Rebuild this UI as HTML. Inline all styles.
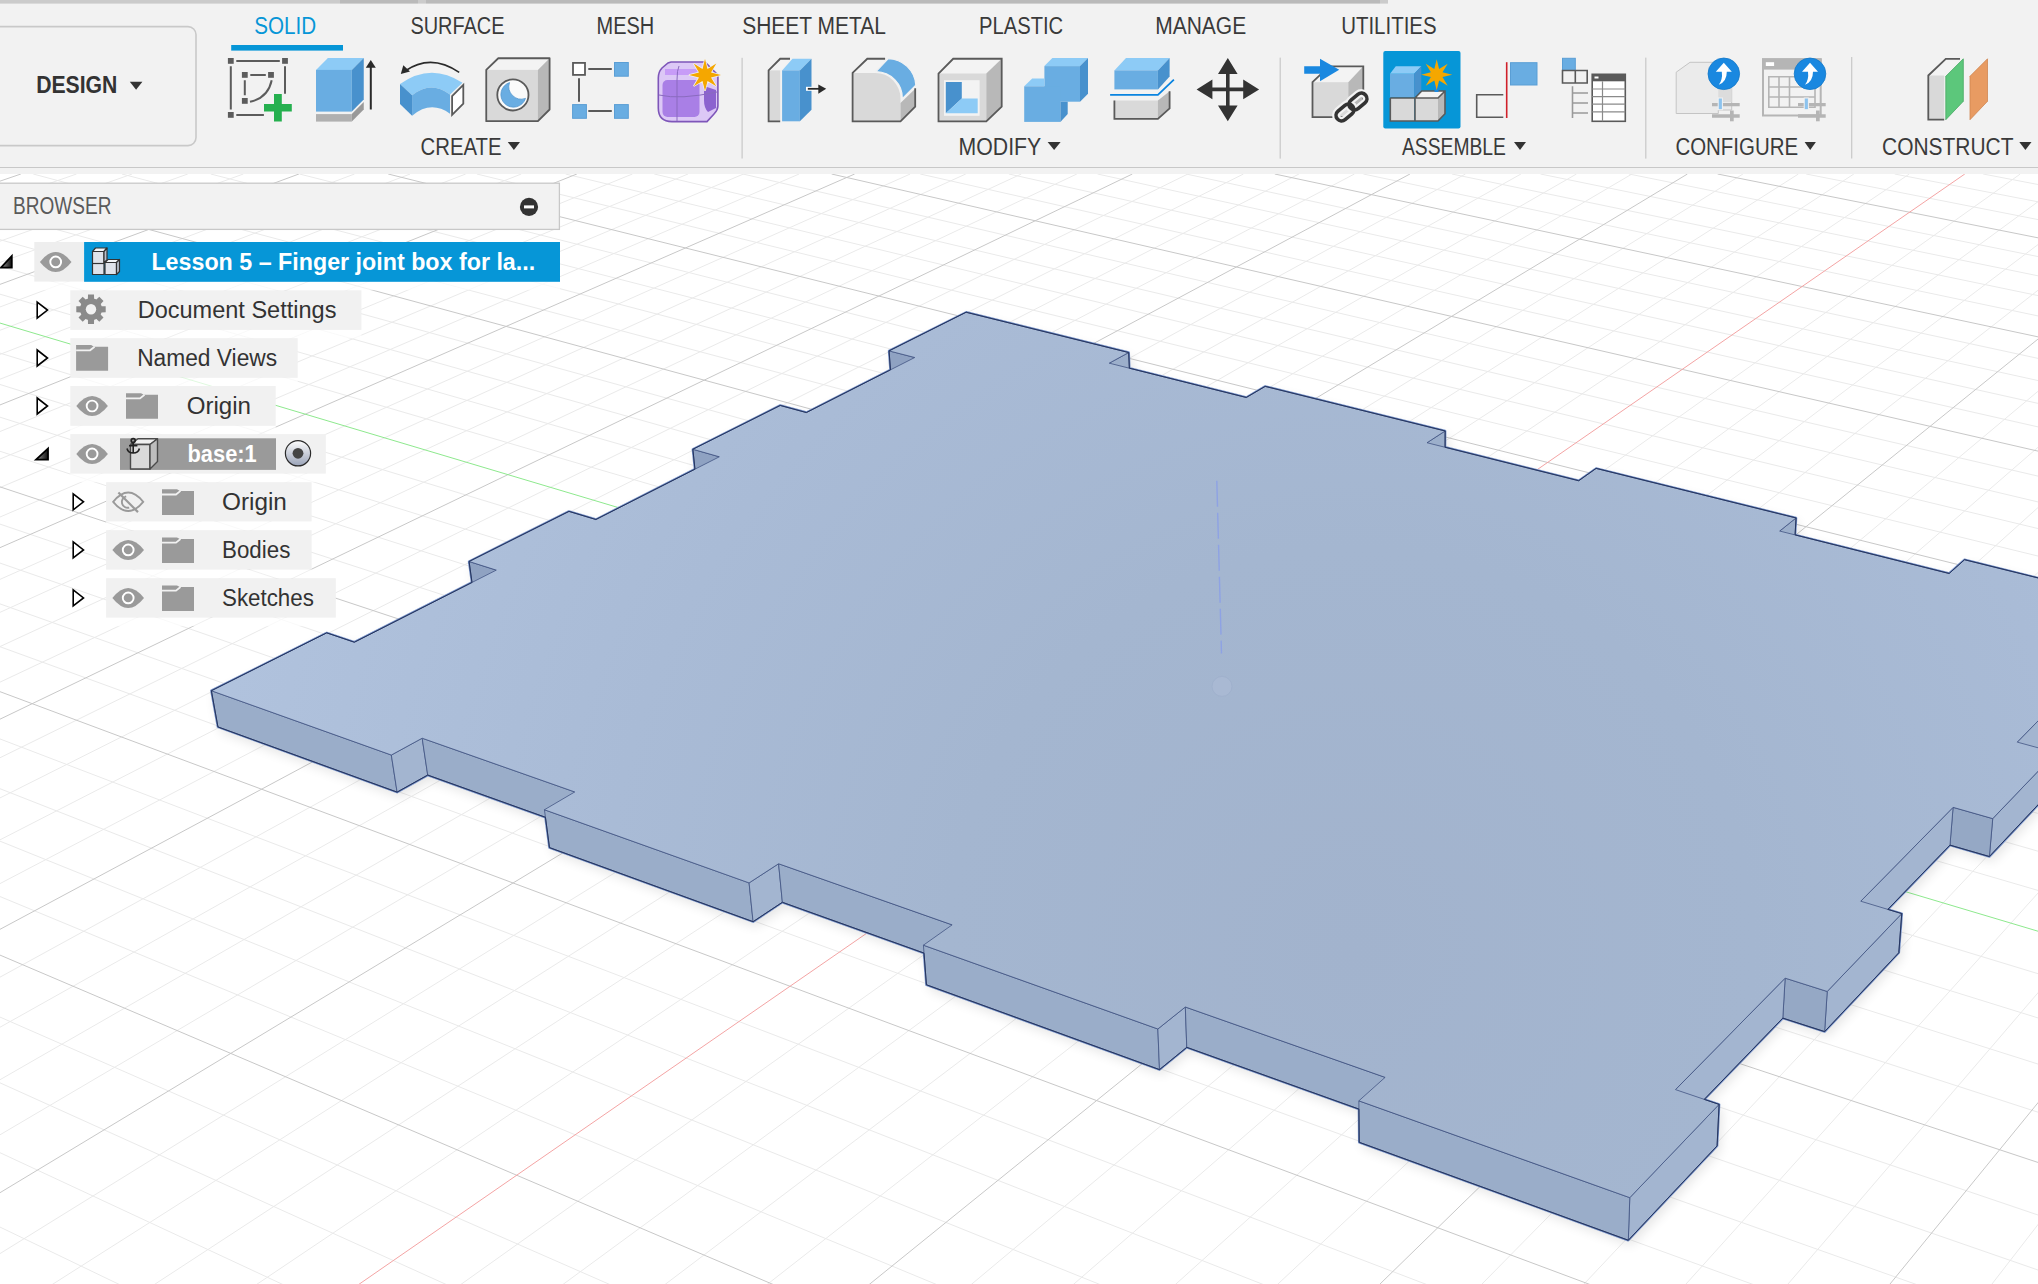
<!DOCTYPE html>
<html><head><meta charset="utf-8"><title>Fusion 360</title><style>
html,body{margin:0;padding:0;}
body{width:2038px;height:1284px;position:relative;overflow:hidden;background:#fff;font-family:"Liberation Sans",sans-serif;}
svg text{font-family:"Liberation Sans",sans-serif;}
</style></head><body>
<svg width="2038" height="1284" viewBox="0 0 2038 1284" style="position:absolute;left:0;top:0">
<defs><radialGradient id="gtop" gradientUnits="userSpaceOnUse" cx="1350" cy="950" r="1150"><stop offset="0" stop-color="#a2b3cd"/><stop offset="0.35" stop-color="#a4b6d0"/><stop offset="0.65" stop-color="#a9bbd6"/><stop offset="1" stop-color="#b0c2dd"/></radialGradient><filter id="shd" x="-10%" y="-10%" width="120%" height="120%"><feGaussianBlur stdDeviation="6"/></filter></defs>
<rect width="2038" height="1284" fill="#fff"/>
<path d="M234.76 1340L-50 1203.04M401.96 1340L-50 1129.4M569.14 1340L-50 1060.24M736.3 1340L-50 995.15M1070.55 1340L-50 875.83M1237.64 1340L-50 821.02M1404.72 1340L-50 769.09M1571.77 1340L-50 719.83M1905.8 1340L-50 628.53M2072.78 1340L-50 586.14M2100 1291.52L-50 545.73M2100 1236.03L-50 507.16M2100 1132.29L-50 435.05M2100 1083.73L-50 401.3M2100 1037.2L-50 368.95M2100 992.57L-50 337.93M2100 908.56L-50 279.54M2100 868.98L-50 252.03M2100 830.9L-50 225.56M2100 794.23L-50 200.07M2100 724.82L33.23 174M2100 691.94L121.98 174M2100 660.2L210.72 174M2100 629.53L299.46 174M2100 571.22L476.88 174M2100 543.48L565.58 174M2100 516.62L654.27 174M2100 490.59L742.94 174M2100 440.92L920.25 174M2100 417.19L1008.89 174M2100 394.16L1097.52 174M2100 371.8L1186.14 174M2100 328.97L1363.33 174M2100 308.45L1451.92 174M2100 288.49L1540.49 174M2100 269.08L1629.04 174M2100 231.77L1806.13 174M2100 213.85L1894.65 174M2100 196.38L1983.16 174M2100 179.36L2071.66 174M2052.94 1340L2100 1275.75M1948.62 1340L2100 1144.53M1739.96 1340L2100 920.55M1635.62 1340L2100 824.21M1531.27 1340L2100 736.45M1426.91 1340L2100 656.17M1218.16 1340L2100 514.52M1113.78 1340L2100 451.72M1009.39 1340L2100 393.49M904.98 1340L2100 339.36M696.15 1340L2100 241.75M591.73 1340L2100 197.6M487.29 1340L2075.71 174M382.85 1340L2020.25 174M173.93 1340L1909.33 174M69.46 1340L1853.86 174M-35.02 1340L1798.39 174M-50 1284.56L1742.92 174M-50 1164.25L1631.95 174M-50 1108.45L1576.46 174M-50 1055.28L1520.96 174M-50 1004.55L1465.46 174M-50 909.79L1354.45 174M-50 865.47L1298.94 174M-50 823.02L1243.42 174M-50 782.32L1187.9 174M-50 705.76L1076.84 174M-50 669.71L1021.3 174M-50 635.03L965.76 174M-50 601.65L910.22 174M-50 538.5L799.11 174M-50 508.61L743.56 174M-50 479.75L687.99 174M-50 451.88L632.42 174M-50 398.91L521.28 174M-50 373.72L465.69 174M-50 349.33L410.11 174M-50 325.71L354.52 174M-50 280.64L243.32 174M-50 259.12L187.72 174M-50 238.24L132.11 174M-50 217.97L76.5 174M-50 179.15L-34.74 174" stroke="#eaeaea" stroke-width="1" fill="none"/>
<path d="M67.53 1340L-50 1281.59M903.44 1340L-50 933.79M1738.79 1340L-50 673.04M2100 1183L-50 470.3M2100 758.89L-50 175.5M2100 599.89L388.18 174M2100 465.37L831.6 174M2100 350.08L1274.74 174M2100 250.18L1717.59 174M1844.3 1340L2100 1026.79M1322.54 1340L2100 582.45M800.57 1340L2100 288.9M-50 1222.88L1687.43 174M-50 956.11L1409.96 174M-50 743.26L1132.37 174M-50 569.5L854.67 174M-50 424.95L576.85 174M-50 302.83L298.92 174M-50 198.28L20.88 174" stroke="#c8c8c8" stroke-width="1" fill="none"/>
<path d="M278.39 1340L1964.8 174" stroke="#f4a4a4" stroke-width="1" fill="none"/>
<path d="M2100 949.72L-50 308.15" stroke="#8ee98e" stroke-width="1" fill="none"/>
<polygon points="780.24,405.46 692.87,449.27 694.95,469.18 595.88,519.52 568.97,511.4 469.07,561.5 471.99,582.47 354.35,642.23 326.73,632.88 211.39,690.72 217.94,726.92 397.1,792.12 427.71,775.06 545.44,817.29 549.47,847.58 753.08,921.68 782.37,902.28 924.01,953.08 926.44,984.78 1159.51,1069.6 1186.78,1047.34 1358.94,1109.09 1359.23,1142.29 1628.3,1240.22 1717.08,1145.88 1719.1,1104.38 1704.29,1099.37 1782.81,1018.11 1824.62,1031.6 1898.81,952.76 1901.78,913.6 1887.85,909.4 1949.97,845.11 1989.37,856.53 2052.3,789.66 2055.9,752.64 2042.77,749.07 2092.38,697.72 2129.6,707.51 2183.64,650.09 2187.67,615.02 1964.56,559.72 1949.15,573.49 1795.09,534.91 1796.04,517.95 1596.13,468.4 1578.73,480.73 1445.06,447.26 1445.13,430.97 1265.2,386.38 1246.29,397.49 1129.34,368.2 1128.7,352.54 966.12,312.25 889.06,350.89 890.49,369.84 806.38,412.57" fill="#000" opacity="0.10" filter="url(#shd)" transform="translate(3,5)"/>
<polygon points="780.24,405.46 692.87,449.27 694.95,469.18 595.88,519.52 568.97,511.4 469.07,561.5 471.99,582.47 354.35,642.23 326.73,632.88 211.39,690.72 217.94,726.92 397.1,792.12 427.71,775.06 545.44,817.29 549.47,847.58 753.08,921.68 782.37,902.28 924.01,953.08 926.44,984.78 1159.51,1069.6 1186.78,1047.34 1358.94,1109.09 1359.23,1142.29 1628.3,1240.22 1717.08,1145.88 1719.1,1104.38 1704.29,1099.37 1782.81,1018.11 1824.62,1031.6 1898.81,952.76 1901.78,913.6 1887.85,909.4 1949.97,845.11 1989.37,856.53 2052.3,789.66 2055.9,752.64 2042.77,749.07 2092.38,697.72 2129.6,707.51 2183.64,650.09 2187.67,615.02 1964.56,559.72 1949.15,573.49 1795.09,534.91 1796.04,517.95 1596.13,468.4 1578.73,480.73 1445.06,447.26 1445.13,430.97 1265.2,386.38 1246.29,397.49 1129.34,368.2 1128.7,352.54 966.12,312.25 889.06,350.89 890.49,369.84 806.38,412.57" fill="#9aadc8" stroke="#7591c8" stroke-width="2.5" stroke-linejoin="round"/>
<polygon points="891.39,381.92 916.98,388.65 914.76,357.51 889.06,350.89" fill="#8fa2c2" stroke="#3e5080" stroke-width="0.9" stroke-opacity="0.85" stroke-linejoin="round"/>
<polygon points="1110.6,394.4 1129.97,383.6 1128.7,352.54 1109.23,363.17" fill="#9cafcb" stroke="#3e5080" stroke-width="0.9" stroke-opacity="0.85" stroke-linejoin="round"/>
<polygon points="696.28,481.87 722.64,489.51 719.34,456.79 692.87,449.27" fill="#8fa2c2" stroke="#3e5080" stroke-width="0.9" stroke-opacity="0.85" stroke-linejoin="round"/>
<polygon points="1426.94,475.23 1444.99,463.27 1445.13,430.97 1427,442.74" fill="#9cafcb" stroke="#3e5080" stroke-width="0.9" stroke-opacity="0.85" stroke-linejoin="round"/>
<polygon points="473.85,595.82 500.96,604.56 496.29,570.12 469.07,561.5" fill="#8fa2c2" stroke="#3e5080" stroke-width="0.9" stroke-opacity="0.85" stroke-linejoin="round"/>
<polygon points="1777.86,564.88 1794.15,551.58 1796.04,517.95 1779.67,531.05" fill="#9cafcb" stroke="#3e5080" stroke-width="0.9" stroke-opacity="0.85" stroke-linejoin="round"/>
<polygon points="2129.6,707.51 2183.64,650.09 2187.67,615.02 2133.47,671.62" fill="#a3b5d0" stroke="#3e5080" stroke-width="0.9" stroke-opacity="0.85" stroke-linejoin="round"/>
<polygon points="2092.38,697.72 2129.6,707.51 2133.47,671.62 2096.03,661.97" fill="#95a8c5" stroke="#3e5080" stroke-width="0.9" stroke-opacity="0.85" stroke-linejoin="round"/>
<polygon points="217.94,726.92 397.1,792.12 391.34,755.04 211.39,690.72" fill="#9aadc9" stroke="#3e5080" stroke-width="0.9" stroke-opacity="0.85" stroke-linejoin="round"/>
<polygon points="2013.85,778.99 2092.38,697.72 2096.03,661.97 2017.22,742.11" fill="#a3b5d0" stroke="#3e5080" stroke-width="0.9" stroke-opacity="0.85" stroke-linejoin="round"/>
<polygon points="397.1,792.12 427.71,775.06 422.18,738.2 391.34,755.04" fill="#a3b5d0" stroke="#3e5080" stroke-width="0.9" stroke-opacity="0.85" stroke-linejoin="round"/>
<polygon points="427.71,775.06 579.57,829.53 574.75,791.94 422.18,738.2" fill="#9aadc9" stroke="#3e5080" stroke-width="0.9" stroke-opacity="0.85" stroke-linejoin="round"/>
<polygon points="1989.37,856.53 2052.3,789.66 2055.9,752.64 1992.73,818.61" fill="#a3b5d0" stroke="#3e5080" stroke-width="0.9" stroke-opacity="0.85" stroke-linejoin="round"/>
<polygon points="1949.97,845.11 1989.37,856.53 1992.73,818.61 1953.08,807.34" fill="#95a8c5" stroke="#3e5080" stroke-width="0.9" stroke-opacity="0.85" stroke-linejoin="round"/>
<polygon points="549.47,847.58 753.08,921.68 749.09,882.9 544.43,809.75" fill="#9aadc9" stroke="#3e5080" stroke-width="0.9" stroke-opacity="0.85" stroke-linejoin="round"/>
<polygon points="1858.06,940.23 1949.97,845.11 1953.08,807.34 1860.76,901.22" fill="#a3b5d0" stroke="#3e5080" stroke-width="0.9" stroke-opacity="0.85" stroke-linejoin="round"/>
<polygon points="753.08,921.68 782.37,902.28 778.59,863.74 749.09,882.9" fill="#a3b5d0" stroke="#3e5080" stroke-width="0.9" stroke-opacity="0.85" stroke-linejoin="round"/>
<polygon points="782.37,902.28 954.94,964.18 952.11,924.86 778.59,863.74" fill="#9aadc9" stroke="#3e5080" stroke-width="0.9" stroke-opacity="0.85" stroke-linejoin="round"/>
<polygon points="1824.62,1031.6 1898.81,952.76 1901.78,913.6 1827.23,991.46" fill="#a3b5d0" stroke="#3e5080" stroke-width="0.9" stroke-opacity="0.85" stroke-linejoin="round"/>
<polygon points="1782.81,1018.11 1824.62,1031.6 1827.23,991.46 1785.14,978.13" fill="#95a8c5" stroke="#3e5080" stroke-width="0.9" stroke-opacity="0.85" stroke-linejoin="round"/>
<polygon points="926.44,984.78 1159.51,1069.6 1157.86,1028.99 923.41,945.2" fill="#9aadc9" stroke="#3e5080" stroke-width="0.9" stroke-opacity="0.85" stroke-linejoin="round"/>
<polygon points="1159.51,1069.6 1186.78,1047.34 1185.33,1007 1157.86,1028.99" fill="#a3b5d0" stroke="#3e5080" stroke-width="0.9" stroke-opacity="0.85" stroke-linejoin="round"/>
<polygon points="1673.78,1130.94 1782.81,1018.11 1785.14,978.13 1675.51,1089.62" fill="#a3b5d0" stroke="#3e5080" stroke-width="0.9" stroke-opacity="0.85" stroke-linejoin="round"/>
<polygon points="1186.78,1047.34 1385.31,1118.56 1385.12,1077.37 1185.33,1007" fill="#9aadc9" stroke="#3e5080" stroke-width="0.9" stroke-opacity="0.85" stroke-linejoin="round"/>
<polygon points="1628.3,1240.22 1717.08,1145.88 1719.1,1104.38 1629.79,1197.66" fill="#a3b5d0" stroke="#3e5080" stroke-width="0.9" stroke-opacity="0.85" stroke-linejoin="round"/>
<polygon points="1359.23,1142.29 1628.3,1240.22 1629.79,1197.66 1358.86,1100.83" fill="#9aadc9" stroke="#3e5080" stroke-width="0.9" stroke-opacity="0.85" stroke-linejoin="round"/>
<polygon points="966.12,312.25 889.06,350.89 914.76,357.51 806.38,412.57 780.24,405.46 692.87,449.27 719.34,456.79 595.88,519.52 568.97,511.4 469.07,561.5 496.29,570.12 354.35,642.23 326.73,632.88 211.39,690.72 391.34,755.04 422.18,738.2 574.75,791.94 544.43,809.75 749.09,882.9 778.59,863.74 952.11,924.86 923.41,945.2 1157.86,1028.99 1185.33,1007 1385.12,1077.37 1358.86,1100.83 1629.79,1197.66 1719.1,1104.38 1675.51,1089.62 1785.14,978.13 1827.23,991.46 1901.78,913.6 1860.76,901.22 1953.08,807.34 1992.73,818.61 2055.9,752.64 2017.22,742.11 2096.03,661.97 2133.47,671.62 2187.67,615.02 1964.56,559.72 1949.15,573.49 1779.67,531.05 1796.04,517.95 1596.13,468.4 1578.73,480.73 1427,442.74 1445.13,430.97 1265.2,386.38 1246.29,397.49 1109.23,363.17 1128.7,352.54" fill="url(#gtop)" stroke="#3e5080" stroke-width="0.9" stroke-opacity="0.85" stroke-linejoin="round"/>
<polygon points="780.24,405.46 692.87,449.27 694.95,469.18 595.88,519.52 568.97,511.4 469.07,561.5 471.99,582.47 354.35,642.23 326.73,632.88 211.39,690.72 217.94,726.92 397.1,792.12 427.71,775.06 545.44,817.29 549.47,847.58 753.08,921.68 782.37,902.28 924.01,953.08 926.44,984.78 1159.51,1069.6 1186.78,1047.34 1358.94,1109.09 1359.23,1142.29 1628.3,1240.22 1717.08,1145.88 1719.1,1104.38 1704.29,1099.37 1782.81,1018.11 1824.62,1031.6 1898.81,952.76 1901.78,913.6 1887.85,909.4 1949.97,845.11 1989.37,856.53 2052.3,789.66 2055.9,752.64 2042.77,749.07 2092.38,697.72 2129.6,707.51 2183.64,650.09 2187.67,615.02 1964.56,559.72 1949.15,573.49 1795.09,534.91 1796.04,517.95 1596.13,468.4 1578.73,480.73 1445.06,447.26 1445.13,430.97 1265.2,386.38 1246.29,397.49 1129.34,368.2 1128.7,352.54 966.12,312.25 889.06,350.89 890.49,369.84 806.38,412.57" fill="none" stroke="#24345f" stroke-width="1.0" stroke-linejoin="round"/>
<path d="M1216.8 480.7L1221.5 653.6" stroke="#8ea2e4" stroke-width="1.4" stroke-dasharray="26 6"/>
<circle cx="1222" cy="686.4" r="10" fill="#a9b9d3" stroke="#a0b1cd" stroke-width="1"/>
</svg>
<svg width="2038" height="1284" viewBox="0 0 2038 1284" style="position:absolute;left:0;top:0" font-family="Liberation Sans, sans-serif"><rect x="0" y="0" width="2038" height="174" fill="#f2f2f2"/>
<rect x="0" y="0" width="340" height="3.6" fill="#cbcbcb"/><rect x="340" y="0" width="78" height="3.6" fill="#bababa"/><rect x="418" y="0" width="8" height="3.6" fill="#cbcbcb"/><rect x="426" y="0" width="954" height="3.6" fill="#bababa"/><rect x="1380" y="0" width="8" height="3.6" fill="#cbcbcb"/>
<rect x="0" y="167" width="2038" height="1" fill="#c8c8c8"/>
<rect x="-10" y="26.6" width="206" height="119" rx="8" fill="#f2f2f2" stroke="#c9c9c9" stroke-width="1.6"/>
<text x="36.2" y="92.5" font-size="24.0" fill="#333" font-weight="bold" textLength="81.2" lengthAdjust="spacingAndGlyphs">DESIGN</text>
<polygon points="129.8,81.8 142.4,81.8 136.1,89.8" fill="#333"/>
<text x="254.3" y="34.2" font-size="23.5" fill="#0696d7" font-weight="normal" textLength="61.9" lengthAdjust="spacingAndGlyphs">SOLID</text>
<text x="410.4" y="34.2" font-size="23.5" fill="#3a3a3a" font-weight="normal" textLength="94.1" lengthAdjust="spacingAndGlyphs">SURFACE</text>
<text x="596.6" y="34.2" font-size="23.5" fill="#3a3a3a" font-weight="normal" textLength="57.6" lengthAdjust="spacingAndGlyphs">MESH</text>
<text x="742.2" y="34.2" font-size="23.5" fill="#3a3a3a" font-weight="normal" textLength="143.7" lengthAdjust="spacingAndGlyphs">SHEET METAL</text>
<text x="979.0" y="34.2" font-size="23.5" fill="#3a3a3a" font-weight="normal" textLength="84.2" lengthAdjust="spacingAndGlyphs">PLASTIC</text>
<text x="1155.2" y="34.2" font-size="23.5" fill="#3a3a3a" font-weight="normal" textLength="91.0" lengthAdjust="spacingAndGlyphs">MANAGE</text>
<text x="1341.2" y="34.2" font-size="23.5" fill="#3a3a3a" font-weight="normal" textLength="95.4" lengthAdjust="spacingAndGlyphs">UTILITIES</text>
<rect x="231.2" y="45" width="111.8" height="5.6" fill="#0696d7"/>
<text x="420.6" y="155.1" font-size="23.5" fill="#3a3a3a" font-weight="normal" textLength="80.9" lengthAdjust="spacingAndGlyphs">CREATE</text>
<polygon points="507.8,142.0 520.0,142.0 513.9,150.0" fill="#333"/>
<text x="958.6" y="155.1" font-size="23.5" fill="#3a3a3a" font-weight="normal" textLength="82.6" lengthAdjust="spacingAndGlyphs">MODIFY</text>
<polygon points="1047.6,142.0 1060.6,142.0 1054.1,150.0" fill="#333"/>
<text x="1402.0" y="155.1" font-size="23.5" fill="#3a3a3a" font-weight="normal" textLength="103.9" lengthAdjust="spacingAndGlyphs">ASSEMBLE</text>
<polygon points="1514.0,142.0 1526.0,142.0 1520.0,150.0" fill="#333"/>
<text x="1675.4" y="155.1" font-size="23.5" fill="#3a3a3a" font-weight="normal" textLength="122.7" lengthAdjust="spacingAndGlyphs">CONFIGURE</text>
<polygon points="1804.6,142.0 1815.9,142.0 1810.2,150.0" fill="#333"/>
<text x="1882.1" y="155.1" font-size="23.5" fill="#3a3a3a" font-weight="normal" textLength="131.4" lengthAdjust="spacingAndGlyphs">CONSTRUCT</text>
<polygon points="2019.3,142.0 2031.5,142.0 2025.4,150.0" fill="#333"/>
<g fill="#5c5c5c">
<rect x="227.9" y="58.0" width="5.8" height="5.8"/>
<rect x="282.1" y="58.0" width="5.8" height="5.8"/>
<rect x="227.9" y="112.0" width="5.8" height="5.8"/>
<rect x="241.9" y="72.0" width="5.8" height="5.8"/>
<rect x="268.1" y="72.0" width="5.8" height="5.8"/>
<rect x="241.9" y="98.0" width="5.8" height="5.8"/>
</g><g stroke="#5c5c5c" stroke-width="2" fill="none"><path d="M236.3 60.9H279.8M230.8 66.3V109.5M285 66.3V93.7M236.3 114.9H263.9M250.3 74.9H265.8M244.8 80.3V95.3"/><path d="M271.7 80.3Q268 98 250 101.8"/></g>
<path d="M274 94.1h7.8v10h10v7.5h-10v10h-7.8v-10h-10v-7.5h10z" fill="#25b04f" stroke="#f2f2f2" stroke-width="1.6" paint-order="stroke"/>
<polygon points="316,69.9 327.9,58 363.75,58 351.8,69.9" fill="#8dcbf6"/>
<rect x="316" y="69.9" width="35.8" height="41.7" fill="#69ade2"/>
<polygon points="351.8,69.9 363.75,58 363.75,99.5 351.8,111.6" fill="#4891cd"/>
<rect x="316" y="114.1" width="35.8" height="7.5" fill="#b0b0b0"/>
<polygon points="351.8,114.1 363.75,102 363.75,109.5 351.8,121.6" fill="#999"/>
<path d="M370.8 66V109.5" stroke="#2a2a2a" stroke-width="2"/><polygon points="365.8,67.8 370.8,59.9 375.8,67.8" fill="#2a2a2a"/>
<path d="M400 84.1Q430.8 62 462.5 82.8L450 94.5Q430.8 80 412.1 95.3Z" fill="#8dcbf6"/>
<path d="M412.1 95.3Q430.8 80 450 94.5V113.7Q430.8 100 412.1 115.75Z" fill="#69ade2"/>
<polygon points="400,84.1 412.1,95.3 412.1,115.75 400,104.1" fill="#4891cd"/>
<polygon points="452.1,96.2 463.3,84.9 463.3,103.7 452.1,114.9" fill="#fff" stroke="#5a5a5a" stroke-width="1.8"/>
<path d="M459.2 72.4Q431 53 405 71" stroke="#2a2a2a" stroke-width="1.6" fill="none"/><polygon points="400.8,74.1 403.3,65.3 410,71.6" fill="#2a2a2a"/>
<polygon points="486.25,69.9 498.3,58.25 549.6,58.25 537.9,69.9" fill="#f3f3f3"/>
<rect x="486.25" y="69.9" width="51.65" height="51.3" fill="#d9d9d9"/>
<polygon points="537.9,69.9 549.6,58.25 549.6,109.5 537.9,121.2" fill="#b8b8b8"/>
<polygon points="486.25,121.2 486.25,69.9 498.3,58.25 549.6,58.25 549.6,109.5 537.9,121.2" fill="none" stroke="#5a5a5a" stroke-width="1.8" stroke-linejoin="round"/>
<circle cx="512.9" cy="94.9" r="15.6" fill="#fafafa" stroke="#5a5a5a" stroke-width="1.8"/>
<path d="M509.5 82.6A12.6 12.6 0 1 0 525.5 98.4A12.5 12.5 0 0 1 509.5 82.6Z" fill="#69ade2" stroke="#5598cf" stroke-width="0.8"/>
<rect x="573" y="62.9" width="12" height="12" fill="#fff" stroke="#5a5a5a" stroke-width="1.8"/>
<rect x="614.5" y="62.5" width="13.8" height="13.7" fill="#69ade2" stroke="#5a9ed5" stroke-width="1"/>
<rect x="572.6" y="104.6" width="13.8" height="13.7" fill="#69ade2" stroke="#5a9ed5" stroke-width="1"/>
<rect x="614.5" y="104.6" width="13.8" height="13.7" fill="#69ade2" stroke="#5a9ed5" stroke-width="1"/>
<path d="M588.3 68.9H611.8M579 78.25V101.8M588.3 110.9H611.8" stroke="#5a5a5a" stroke-width="2"/>
<path d="M671 62H705L717.9 75V106Q717.9 110 714 114L707 121.6H672Q658.3 121.6 658.3 108V78Q658.3 72 662 68L668 63Z" fill="#dcc8f6" stroke="#7e56b9" stroke-width="1.6"/>
<rect x="662.5" y="80" width="37" height="37" rx="5" fill="#a97fe6"/>
<path d="M665 69H700L703 75H665Z" fill="#c79cf7"/>
<path d="M704 86L716 90V108L708 112Q704 108 704 100Z" fill="#8c63cf"/>
<path d="M679 66Q677 70 677 80V121M659 95Q680 100 717 92" stroke="#8a6bbf" stroke-width="1" fill="none"/>
<polygon points="705.0,58.9 707.5,68.9 716.3,63.6 711.0,72.4 721.0,74.9 711.0,77.4 716.3,86.2 707.5,80.9 705.0,90.9 702.5,80.9 693.7,86.2 699.0,77.4 689.0,74.9 699.0,72.4 693.7,63.6 702.5,68.9" fill="#f5a700" stroke="#f2f2f2" stroke-width="1.5" paint-order="stroke"/>
<rect x="741.5" y="57.8" width="1.2" height="100.7" fill="#c8c8c8"/>
<polygon points="768.6,70.4 780.2,58.75 790,58.75 780.2,70.4" fill="#f3f3f3"/>
<rect x="768.6" y="70.4" width="11.6" height="50.9" fill="#d9d9d9"/>
<path d="M780.2 121.3H768.6V70.4L780.2 58.75H790" fill="none" stroke="#5a5a5a" stroke-width="1.8"/>
<polygon points="782.1,70.4 792.5,58.75 811.5,58.75 799.9,70.4" fill="#8dcbf6"/>
<rect x="782.1" y="70.4" width="17.8" height="50.9" fill="#69ade2"/>
<polygon points="799.9,70.4 811.5,58.75 811.5,109.7 799.9,121.3" fill="#4891cd"/>
<path d="M806 88.8H819" stroke="#fff" stroke-width="4"/><path d="M807.8 88.8H819" stroke="#2a2a2a" stroke-width="1.8"/><polygon points="818.3,84.5 826.2,88.8 818.3,93.7" fill="#2a2a2a"/>
<path d="M852.6 72.9L867.3 58.75H887.6L875.3 72.9Z" fill="#f3f3f3"/>
<path d="M852.6 72.9H875.3A25.2 25.7 0 0 1 900.5 98.6V121.3H852.6Z" fill="#d9d9d9"/>
<polygon points="900.5,102.9 915.2,88.8 915.2,106.6 900.5,121.3" fill="#b8b8b8"/>
<path d="M876 71.6L888 58.75A28 28 0 0 1 915.8 85.1L902.3 98.6A27 26 0 0 0 876 71.6Z" fill="#69ade2" stroke="#f2f2f2" stroke-width="1.2"/>
<path d="M885.1 58.75H867.3L852.6 72.9V121.3H900.5L915.2 106.6V88.2" fill="none" stroke="#5a5a5a" stroke-width="1.8"/>
<polygon points="938.5,73.5 953.2,58.75 1001.7,58.75 986.3,73.5" fill="#f3f3f3"/>
<rect x="938.5" y="73.5" width="47.8" height="47.8" fill="#d9d9d9"/>
<polygon points="986.3,73.5 1001.7,58.75 1001.7,106.6 986.3,121.3" fill="#b8b8b8"/>
<polygon points="938.5,121.3 938.5,73.5 953.2,58.75 1001.7,58.75 1001.7,106.6 986.3,121.3" fill="none" stroke="#5a5a5a" stroke-width="1.8"/>
<rect x="944" y="80.2" width="35.6" height="35.6" fill="#f3f3f3"/>
<polygon points="945.8,82 961.8,82 961.8,98.6 945.8,113.3" fill="#4891cd"/>
<polygon points="945.8,113.3 961.8,98.6 977.7,98.6 977.7,113.3" fill="#8dcbf6"/>
<polygon points="1044.4,66.1 1052.4,58.1 1088,58.1 1080,66.1" fill="#8dcbf6"/>
<rect x="1044.4" y="66.1" width="35.6" height="35.6" fill="#69ade2"/>
<polygon points="1080,66.1 1088,58.1 1088,93.7 1080,101.7" fill="#4891cd"/>
<polygon points="1024.2,86.3 1032.2,78.4 1044.4,78.4 1044.4,86.3" fill="#8dcbf6"/>
<rect x="1024.2" y="86.3" width="36.2" height="35.6" fill="#69ade2"/>
<polygon points="1060.4,101.7 1067.7,101.7 1067.7,113.9 1060.4,121.9" fill="#4891cd"/>
<polygon points="1114.4,70.4 1126,58.1 1169.6,58.1 1157.9,70.4" fill="#8dcbf6"/>
<rect x="1114.4" y="70.4" width="43.5" height="19" fill="#69ade2"/>
<polygon points="1157.9,70.4 1169.6,58.1 1169.6,76.5 1157.9,89.4" fill="#4891cd"/>
<path d="M1110.1 94.9H1157.9L1173.9 79.6" fill="none" stroke="#0a84e0" stroke-width="1.8"/>
<rect x="1114.4" y="100.5" width="43.5" height="18.4" fill="#d9d9d9"/>
<polygon points="1157.9,100.5 1169.6,91.3 1169.6,108.4 1157.9,118.9" fill="#b8b8b8"/>
<path d="M1114.4 100.5V118.9H1157.9L1169.6 108.4V91.3" fill="none" stroke="#5a5a5a" stroke-width="1.8"/>
<path d="M1227.8 58.1L1237.6 74H1229.6V87.6H1243.2V79.6L1259.1 89.4L1243.2 99.2V91.2H1229.6V105.4H1237.6L1227.8 121.3L1218 105.4H1226V91.2H1212.4V99.2L1196.6 89.4L1212.4 79.6V87.6H1226V74H1218Z" fill="#333"/>
<rect x="1279.6" y="57.6" width="1.2" height="101" fill="#c8c8c8"/>
<polygon points="1312.5,82.2 1329.2,66.3 1363.3,66.3 1348.3,82.2" fill="#f3f3f3"/>
<rect x="1312.5" y="82.2" width="35.8" height="35" fill="#d9d9d9"/>
<polygon points="1348.3,82.2 1363.3,66.3 1363.3,101.3 1348.3,117.2" fill="#b8b8b8"/>
<polygon points="1312.5,117.2 1312.5,82.2 1329.2,66.3 1363.3,66.3 1363.3,101.3 1348.3,117.2" fill="none" stroke="#5a5a5a" stroke-width="1.8"/>
<path d="M1304.2 66.3H1320V58.8L1339.2 69.7L1320 81.3V73.8H1304.2Z" fill="#1a88e0"/>
<g fill="none" stroke="#f2f2f2" stroke-width="8"><rect x="1335" y="107" width="20" height="11" rx="5.5" transform="rotate(-40 1345 112.5)"/><rect x="1348" y="96" width="20" height="11" rx="5.5" transform="rotate(-40 1358 101.5)"/></g>
<g fill="none" stroke="#333" stroke-width="3.6"><rect x="1335" y="107" width="20" height="11" rx="5.5" transform="rotate(-40 1345 112.5)"/><rect x="1348" y="96" width="20" height="11" rx="5.5" transform="rotate(-40 1358 101.5)"/></g>
<rect x="1383.3" y="51" width="77.2" height="77.5" rx="2" fill="#0696d7"/>
<polygon points="1390,73.8 1395.8,66.3 1421.3,66.3 1414.2,73.8" fill="#8dcbf6"/>
<rect x="1390" y="73.8" width="24.2" height="23.4" fill="#69ade2"/>
<polygon points="1414.2,73.8 1421.3,66.3 1421.3,90.5 1414.2,97.2" fill="#4891cd"/>
<rect x="1390.3" y="98" width="23.9" height="23" fill="#d9d9d9"/>
<polygon points="1415,98 1421.7,91 1445,91 1438,98" fill="#f3f3f3"/>
<rect x="1415" y="98" width="23" height="23" fill="#d9d9d9"/>
<polygon points="1438,98 1445,91 1445,113.8 1438,121" fill="#b8b8b8"/>
<path d="M1390.3 98V121H1438L1445 113.8V91H1421.7L1415 98V121M1390.3 98H1438L1445 91" fill="none" stroke="#5a5a5a" stroke-width="1.6"/>
<rect x="1434.5" y="84" width="4" height="8" fill="#1a88e0"/>
<polygon points="1436.7,59.2 1439.1,68.9 1447.7,63.7 1442.5,72.3 1452.2,74.7 1442.5,77.1 1447.7,85.7 1439.1,80.5 1436.7,90.2 1434.3,80.5 1425.7,85.7 1430.9,77.1 1421.2,74.7 1430.9,72.3 1425.7,63.7 1434.3,68.9" fill="#f5a700"/>
<path d="M1503.3 94.7H1476.7V117.2H1503.3" fill="none" stroke="#5a5a5a" stroke-width="1.6"/>
<rect x="1505.9" y="62.2" width="1.6" height="55.8" fill="#d0202a"/>
<rect x="1510.5" y="62.7" width="26.5" height="22.3" fill="#69ade2" stroke="#5a9ed5" stroke-width="1"/>
<rect x="1562.5" y="58.3" width="12.8" height="12.2" fill="#69ade2" stroke="#5a9ed5" stroke-width="1"/>
<path d="M1562.5 70.5H1587.2V83H1562.5ZM1575.3 70.5V83" fill="none" stroke="#5a5a5a" stroke-width="1.6"/>
<path d="M1572.5 86.3V118M1572.5 93H1588M1572.5 103H1588M1572.5 113H1588" stroke="#9a9a9a" stroke-width="1.6" fill="none"/>
<rect x="1592.2" y="74.3" width="33.1" height="47" fill="#fff" stroke="#5a5a5a" stroke-width="1.6"/>
<rect x="1592.2" y="74.3" width="33.1" height="7" fill="#5a5a5a"/><rect x="1594.5" y="76.5" width="4" height="2" fill="#fff"/>
<path d="M1602.5 81.3V121.3M1592.2 89H1625.3M1592.2 96.6H1625.3M1592.2 104.2H1625.3M1592.2 111.8H1625.3" stroke="#8a8a8a" stroke-width="1.2" fill="none"/>
<rect x="1645.2" y="57.6" width="1.2" height="101" fill="#c8c8c8"/>
<path d="M1676.2 113.5V72.2L1690 62.3H1731.7V110H1718.3V113.5Z" fill="#ebebeb" stroke="#c4c4c4" stroke-width="1"/>
<rect x="1718.3" y="88" width="13.4" height="14" fill="#dcdcdc"/>
<path d="M1712.0 104.6H1739.7M1712.0 116H1739.7" stroke="#b5b5b5" stroke-width="3.4"/><rect x="1718.2" y="98" width="4.2" height="11.7" fill="#8cc3ee" stroke="#f2f2f2" stroke-width="1"/><rect x="1730.0" y="110.5" width="3.7" height="10.8" fill="#b5b5b5"/>
<circle cx="1723.8" cy="73.8" r="15.8" fill="#1a88e0" stroke="#1478c8" stroke-width="0.8"/><path d="M1723.8 62.8L1731.8 71.8H1726.8Q1726.8 81.8 1718.8 84.8Q1722.8 79.8 1721.8 71.8H1715.8Z" fill="#fff"/>
<rect x="1763" y="59.3" width="57.7" height="56.2" fill="none" stroke="#b5b5b5" stroke-width="2"/>
<rect x="1762" y="58.3" width="59.7" height="11.3" fill="#b5b5b5"/><rect x="1765.8" y="62.2" width="8.3" height="3.8" fill="#fff"/>
<path d="M1768.8 76.8H1815V107.2H1768.8ZM1768.8 87H1815M1768.8 97H1815M1779 76.8V107.2M1789.5 76.8V107.2" fill="none" stroke="#b5b5b5" stroke-width="1.6"/>
<path d="M1798.0 104.6H1825.7M1798.0 116H1825.7" stroke="#b5b5b5" stroke-width="3.4"/><rect x="1804.2" y="98" width="4.2" height="11.7" fill="#8cc3ee" stroke="#f2f2f2" stroke-width="1"/><rect x="1816.0" y="110.5" width="3.7" height="10.8" fill="#b5b5b5"/>
<circle cx="1810.0" cy="73.8" r="15.8" fill="#1a88e0" stroke="#1478c8" stroke-width="0.8"/><path d="M1810.0 62.8L1818.0 71.8H1813.0Q1813.0 81.8 1805.0 84.8Q1809.0 79.8 1808.0 71.8H1802.0Z" fill="#fff"/>
<rect x="1851.1" y="57" width="1.2" height="101.5" fill="#c8c8c8"/>
<polygon points="1928.3,75.5 1943.2,58.8 1962,58.8 1944.2,75.5" fill="#f3f3f3"/>
<rect x="1928.3" y="75.5" width="15.9" height="44.2" fill="#d9d9d9"/>
<path d="M1944.2 119.7H1928.3V75.5L1945.8 58.8H1960" fill="none" stroke="#5a5a5a" stroke-width="1.8"/>
<polygon points="1945.8,76.3 1963.3,58.8 1963.3,101.3 1945.8,119.7" fill="#5cc77b" stroke="#46a862" stroke-width="0.8"/>
<polygon points="1970,76.3 1987.5,58.8 1987.5,101.3 1970,119.7" fill="#e89b62" stroke="#cf8550" stroke-width="0.8"/><rect x="-2" y="183.2" width="561.4" height="46.2" fill="#f2f2f2" stroke="#c8c8c8" stroke-width="1.3"/>
<text x="13.1" y="213.9" font-size="23.0" fill="#5a5a5a" font-weight="normal" textLength="98.4" lengthAdjust="spacingAndGlyphs">BROWSER</text>
<circle cx="529" cy="206.9" r="9.1" fill="#333"/><rect x="524" y="205.4" width="10" height="3" fill="#fff"/>
<rect x="34.3" y="281.6" width="525.7" height="8.6" fill="#fff" opacity="0.72"/>
<rect x="70.3" y="329.9" width="291.1" height="8.6" fill="#fff" opacity="0.72"/>
<rect x="70.3" y="377.8" width="227.4" height="8.6" fill="#fff" opacity="0.72"/>
<rect x="70.3" y="425.8" width="205.4" height="8.6" fill="#fff" opacity="0.72"/>
<rect x="70.3" y="473.6" width="255.5" height="8.6" fill="#fff" opacity="0.72"/>
<rect x="106.1" y="521.4" width="205.5" height="8.6" fill="#fff" opacity="0.72"/>
<rect x="106.1" y="569.6" width="205.5" height="8.6" fill="#fff" opacity="0.72"/>
<rect x="106.1" y="617.6" width="229.7" height="8.6" fill="#fff" opacity="0.72"/>
<rect x="34.3" y="242" width="49.8" height="39.6" fill="#eeeeee"/>
<rect x="84.1" y="242" width="475.9" height="39.8" fill="#0696d7"/>
<defs><linearGradient id="tg255" x1="0" y1="0" x2="1" y2="0"><stop offset="0" stop-color="#9a9a9a"/><stop offset="1" stop-color="#111"/></linearGradient></defs><path d="M1.0 267.7L11.8 256.0L11.8 267.7Z" fill="url(#tg255)" stroke="#000" stroke-width="1.8"/>
<path d="M39.9 261.9Q55.7 241.9 71.5 261.9Q55.7 281.9 39.9 261.9Z" fill="#9a9a9a"/><circle cx="55.7" cy="261.9" r="5.4" fill="none" stroke="#fff" stroke-width="1.9"/>
<g stroke="#333" stroke-width="1.2" stroke-linejoin="round"><path d="M92.5 251.5H104.0V274.5H92.5Z" fill="#dfe3ea"/><path d="M92.5 251.5L95.5 248.0H107.0L104.0 251.5Z" fill="#f4f6f9"/><path d="M104.0 251.5L107.0 248.0V260.0L104.0 262.5Z" fill="#b9c0cc"/><path d="M105.0 262.5H116.5V274.5H105.0Z" fill="#dfe3ea"/><path d="M105.0 262.5L108.0 259.5H119.5L116.5 262.5Z" fill="#f4f6f9"/><path d="M116.5 262.5L119.5 259.5V271.5L116.5 274.5Z" fill="#b9c0cc"/><path d="M92.5 263.5H104.0" fill="none"/></g>
<text x="151.4" y="269.7" font-size="23.0" fill="#fff" font-weight="bold" textLength="383.8" lengthAdjust="spacingAndGlyphs">Lesson 5 – Finger joint box for la...</text>
<rect x="70.3" y="290.3" width="291.1" height="39.6" fill="#f1f1f1"/>
<path d="M37.2 302.1L47.5 310.1L37.2 318.1Z" fill="#fff" stroke="#000" stroke-width="1.6" stroke-linejoin="miter"/>
<polygon points="105.7,306.3 105.7,312.3 101.0,312.4 100.3,314.2 103.5,317.6 99.3,321.8 95.9,318.6 94.1,319.3 94.0,324.0 88.0,324.0 87.9,319.3 86.1,318.6 82.7,321.8 78.5,317.6 81.7,314.2 81.0,312.4 76.3,312.3 76.3,306.3 81.0,306.2 81.7,304.4 78.5,301.0 82.7,296.8 86.1,300.0 87.9,299.3 88.0,294.6 94.0,294.6 94.1,299.3 95.9,300.0 99.3,296.8 103.5,301.0 100.3,304.4 101.0,306.2" fill="#8a8a8a"/><circle cx="91.0" cy="309.3" r="11" fill="#8a8a8a"/><circle cx="91.0" cy="309.3" r="5.2" fill="#f1f1f1"/>
<text x="137.7" y="318.0" font-size="23.5" fill="#333" font-weight="normal" textLength="198.7" lengthAdjust="spacingAndGlyphs">Document Settings</text>
<rect x="70.3" y="338.2" width="227.4" height="39.6" fill="#f1f1f1"/>
<path d="M37.2 350.0L47.5 358.0L37.2 366.0Z" fill="#fff" stroke="#000" stroke-width="1.6" stroke-linejoin="miter"/>
<path d="M76.1 345.1H91.1L94.1 346.7H108.1V370.7H76.1Z" fill="#9a9a9a"/><path d="M76.1 350.3H90.1L94.6 346.7" fill="none" stroke="#f1f1f1" stroke-width="1.8"/>
<text x="137.2" y="366.4" font-size="23.5" fill="#333" font-weight="normal" textLength="139.9" lengthAdjust="spacingAndGlyphs">Named Views</text>
<rect x="70.3" y="386" width="205.4" height="39.8" fill="#f1f1f1"/>
<path d="M37.2 398.0L47.5 406.0L37.2 414.0Z" fill="#fff" stroke="#000" stroke-width="1.6" stroke-linejoin="miter"/>
<path d="M76.3 406.0Q92.1 386.0 107.9 406.0Q92.1 426.0 76.3 406.0Z" fill="#9a9a9a"/><circle cx="92.1" cy="406.0" r="5.4" fill="none" stroke="#fff" stroke-width="1.9"/>
<path d="M126.0 393.2H141.0L144.0 394.8H158.0V418.8H126.0Z" fill="#9a9a9a"/><path d="M126.0 398.4H140.0L144.5 394.8" fill="none" stroke="#f1f1f1" stroke-width="1.8"/>
<text x="186.7" y="413.8" font-size="23.5" fill="#333" font-weight="normal" textLength="64.3" lengthAdjust="spacingAndGlyphs">Origin</text>
<rect x="70.3" y="434.1" width="255.5" height="39.5" fill="#f1f1f1"/>
<defs><linearGradient id="tg447" x1="0" y1="0" x2="1" y2="0"><stop offset="0" stop-color="#9a9a9a"/><stop offset="1" stop-color="#111"/></linearGradient></defs><path d="M36.0 459.7L48.0 448.6L48.0 459.7Z" fill="url(#tg447)" stroke="#000" stroke-width="1.8"/>
<path d="M76.3 453.9Q92.1 433.9 107.9 453.9Q92.1 473.9 76.3 453.9Z" fill="#9a9a9a"/><circle cx="92.1" cy="453.9" r="5.4" fill="none" stroke="#fff" stroke-width="1.9"/>
<rect x="120" y="438.3" width="156" height="31.6" fill="#9a9a9a"/>
<g stroke="#4a4a4a" stroke-width="1.4" stroke-linejoin="round"><path d="M130.5 444.5H150L157.5 438.8H138Z" fill="#f0f0f0"/><rect x="130.5" y="444.5" width="19.5" height="24.5" fill="#dadada"/><path d="M150 444.5L157.5 438.8V461.5L150 469Z" fill="#bdbdbd"/></g>
<g stroke="#222" stroke-width="1.6" fill="none"><circle cx="133.2" cy="440.6" r="2"/><path d="M133.2 442.6V452.5M129 445.8H137.4M127 448.5Q128 453 133.2 453Q138.4 453 139.4 448.5"/></g>
<text x="187.5" y="462.2" font-size="23.0" fill="#fff" font-weight="bold" textLength="69.2" lengthAdjust="spacingAndGlyphs">base:1</text>
<defs><linearGradient id="rg" x1="0" y1="0" x2="0" y2="1"><stop offset="0" stop-color="#fdfdfd"/><stop offset="1" stop-color="#9aa3b8"/></linearGradient></defs><circle cx="298.0" cy="453.3" r="12.6" fill="url(#rg)" stroke="#2a2a2a" stroke-width="1.2"/><circle cx="298.0" cy="453.3" r="5.4" fill="#444"/>
<rect x="106.1" y="482.2" width="205.5" height="39.2" fill="#f1f1f1"/>
<path d="M73.2 493.8L83.5 501.8L73.2 509.8Z" fill="#fff" stroke="#000" stroke-width="1.6" stroke-linejoin="miter"/>
<path d="M113.2 501.8Q128.2 483.3 143.2 501.8Q128.2 520.3 113.2 501.8Z" fill="none" stroke="#9a9a9a" stroke-width="1.9"/><path d="M126.2 496.3A5.5 5.5 0 0 0 129.2 507.6" fill="none" stroke="#9a9a9a" stroke-width="1.9"/><path d="M118.4 492.5L138.0 512.1" stroke="#9a9a9a" stroke-width="2.2"/>
<path d="M162.0 489.3H177.0L180.0 490.9H194.0V514.9H162.0Z" fill="#9a9a9a"/><path d="M162.0 494.5H176.0L180.5 490.9" fill="none" stroke="#f1f1f1" stroke-width="1.8"/>
<text x="222.0" y="509.8" font-size="23.5" fill="#333" font-weight="normal" textLength="64.9" lengthAdjust="spacingAndGlyphs">Origin</text>
<rect x="106.1" y="530.2" width="205.5" height="39.4" fill="#f1f1f1"/>
<path d="M73.2 541.9L83.5 549.9L73.2 557.9Z" fill="#fff" stroke="#000" stroke-width="1.6" stroke-linejoin="miter"/>
<path d="M112.4 549.9Q128.2 529.9 144.0 549.9Q128.2 569.9 112.4 549.9Z" fill="#9a9a9a"/><circle cx="128.2" cy="549.9" r="5.4" fill="none" stroke="#fff" stroke-width="1.9"/>
<path d="M162.0 537.4H177.0L180.0 539.0H194.0V563.0H162.0Z" fill="#9a9a9a"/><path d="M162.0 542.6H176.0L180.5 539.0" fill="none" stroke="#f1f1f1" stroke-width="1.8"/>
<text x="222.0" y="557.9" font-size="23.5" fill="#333" font-weight="normal" textLength="68.3" lengthAdjust="spacingAndGlyphs">Bodies</text>
<rect x="106.1" y="578.2" width="229.7" height="39.4" fill="#f1f1f1"/>
<path d="M73.2 589.9L83.5 597.9L73.2 605.9Z" fill="#fff" stroke="#000" stroke-width="1.6" stroke-linejoin="miter"/>
<path d="M112.4 597.9Q128.2 577.9 144.0 597.9Q128.2 617.9 112.4 597.9Z" fill="#9a9a9a"/><circle cx="128.2" cy="597.9" r="5.4" fill="none" stroke="#fff" stroke-width="1.9"/>
<path d="M162.0 585.4H177.0L180.0 587.0H194.0V611.0H162.0Z" fill="#9a9a9a"/><path d="M162.0 590.6H176.0L180.5 587.0" fill="none" stroke="#f1f1f1" stroke-width="1.8"/>
<text x="222.0" y="605.9" font-size="23.5" fill="#333" font-weight="normal" textLength="91.9" lengthAdjust="spacingAndGlyphs">Sketches</text></svg>
</body></html>
